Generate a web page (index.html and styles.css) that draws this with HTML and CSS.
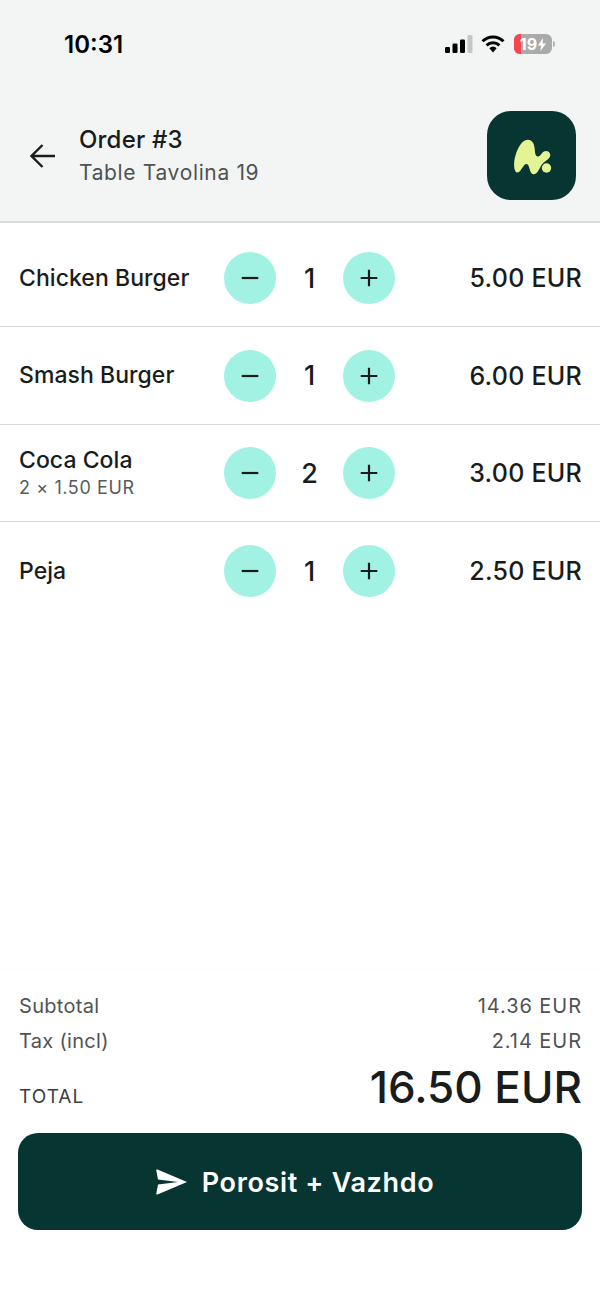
FILE: index.html
```html
<!DOCTYPE html>
<html lang="en">
<head>
    <meta charset="UTF-8">
    <meta name="viewport" content="width=device-width, initial-scale=1.0">
    <title>Order #3</title>
    <link rel="stylesheet" href="styles.css">
</head>
<body>
    <div class="app">
        <header class="top">
            <div class="status-bar">
                <span class="time">10:31</span>
                <div class="status-icons">
                    <svg width="28" height="18" viewBox="0 0 28 18">
                        <rect x="0" y="12" width="5" height="6" rx="1.2" fill="#000"/>
                        <rect x="7.5" y="8.5" width="5" height="9.5" rx="1.2" fill="#000"/>
                        <rect x="15" y="4.5" width="5" height="13.5" rx="1.2" fill="#000"/>
                        <rect x="22.5" y="0" width="5" height="18" rx="1.2" fill="#c6c6c6"/>
                    </svg>
                    <svg width="24" height="18" viewBox="0 0 24 18">
                        <path d="M1.5 6.2a15 15 0 0 1 21 0" fill="none" stroke="#000" stroke-width="3"/>
                        <path d="M5.6 10.3a9.2 9.2 0 0 1 12.8 0" fill="none" stroke="#000" stroke-width="3"/>
                        <path d="M8.4 13.2a4.6 4.6 0 0 1 7.2 0L12 17.6z" fill="#000"/>
                    </svg>
                    <div class="battery">
                        <div class="battery-body">
                            <span class="battery-low"></span>
                            <span class="battery-text">19</span>
                            <svg width="8" height="13" viewBox="0 0 8 13"><path d="M5 0 0 7.4h3L2.4 13 8 5.4H4.6z" fill="#fff"/></svg>
                        </div>
                        <span class="battery-cap"></span>
                    </div>
                </div>
            </div>
            <div class="title-bar">
                <svg class="back" width="28" height="28" viewBox="0 0 28 28">
                    <path d="M26 14H3M13.5 3 2.5 14l11 11" fill="none" stroke="#1a1c1c" stroke-width="2.4"/>
                </svg>
                <div class="title-text">
                    <div class="title">Order #3</div>
                    <div class="subtitle">Table Tavolina 19</div>
                </div>
                <div class="logo">
                    <svg width="40" height="40" viewBox="0 0 40 40">
                        <path d="M5 36.500C2 36 1 27 3.500 19.500 6 11 10.500 4 15.500 3.800c5.500-.2 7 5.200 7.300 10.200.2 4 1.200 7 3.700 6.500C29 20 30 15 34 15c3.500 0 5.500 3.500 3.500 6.500-2 3-5.500 4-8 7.500-2 3-4 9.500-8 9.300-4.500-.3-3.500-10.300-7-10.300S9 37 5 36.500z" fill="#e4f393"/>
                        <circle cx="34.500" cy="32" r="4.700" fill="#e4f393"/>
                    </svg>
                </div>
            </div>
        </header>

        <main class="items">
            <div class="item">
                <div class="item-name"><div>Chicken Burger</div></div>
                <div class="stepper">
                    <button class="step"><svg width="18" height="18" viewBox="0 0 18 18"><path d="M.7 9h16.600" stroke="#1a1c1c" stroke-width="2.200"/></svg></button>
                    <span class="qty">1</span>
                    <button class="step"><svg width="18" height="18" viewBox="0 0 18 18"><path d="M.7 9h16.600M9 .7v16.600" stroke="#1a1c1c" stroke-width="2.200"/></svg></button>
                </div>
                <div class="item-price">5.00 EUR</div>
            </div>
            <div class="item">
                <div class="item-name"><div>Smash Burger</div></div>
                <div class="stepper">
                    <button class="step"><svg width="18" height="18" viewBox="0 0 18 18"><path d="M.7 9h16.600" stroke="#1a1c1c" stroke-width="2.200"/></svg></button>
                    <span class="qty">1</span>
                    <button class="step"><svg width="18" height="18" viewBox="0 0 18 18"><path d="M.7 9h16.600M9 .7v16.600" stroke="#1a1c1c" stroke-width="2.200"/></svg></button>
                </div>
                <div class="item-price">6.00 EUR</div>
            </div>
            <div class="item">
                <div class="item-name">
                    <div>Coca Cola</div>
                    <div class="item-note">2 × 1.50 EUR</div>
                </div>
                <div class="stepper">
                    <button class="step"><svg width="18" height="18" viewBox="0 0 18 18"><path d="M.7 9h16.600" stroke="#1a1c1c" stroke-width="2.200"/></svg></button>
                    <span class="qty">2</span>
                    <button class="step"><svg width="18" height="18" viewBox="0 0 18 18"><path d="M.7 9h16.600M9 .7v16.600" stroke="#1a1c1c" stroke-width="2.200"/></svg></button>
                </div>
                <div class="item-price">3.00 EUR</div>
            </div>
            <div class="item">
                <div class="item-name"><div>Peja</div></div>
                <div class="stepper">
                    <button class="step"><svg width="18" height="18" viewBox="0 0 18 18"><path d="M.7 9h16.600" stroke="#1a1c1c" stroke-width="2.200"/></svg></button>
                    <span class="qty">1</span>
                    <button class="step"><svg width="18" height="18" viewBox="0 0 18 18"><path d="M.7 9h16.600M9 .7v16.600" stroke="#1a1c1c" stroke-width="2.200"/></svg></button>
                </div>
                <div class="item-price">2.50 EUR</div>
            </div>
        </main>

        <footer class="summary">
            <div class="line"><span>Subtotal</span><span class="line-value">14.36 EUR</span></div>
            <div class="line"><span>Tax (incl)</span><span class="line-value">2.14 EUR</span></div>
            <div class="total-line">
                <span class="total-label">TOTAL</span>
                <span class="total-value">16.50 EUR</span>
            </div>
            <button class="send-btn">
                <svg width="32" height="26" viewBox="0 0 32 26">
                    <path d="M1.500.5 31 13 1.500 25.500c-.7.3-1.300-.2-1.200-1L2 15.500 22 13 2 10.500.3 1.500C.2.700.8.200 1.500.5z" fill="#fff"/>
                </svg>
                Porosit + Vazhdo
            </button>
        </footer>
    </div>
</body>
</html>
```

FILE: styles.css
```css
* { margin: 0; padding: 0; box-sizing: border-box; }
body {
    font-family: Inter, 'Noto Sans', sans-serif;
    background: white;
    color: #1a1c1c;
}
.app {
    width: 600px;
    height: 1301px;
    display: flex;
    flex-direction: column;
}
.top {
    height: 223px;
    background: #f3f5f5;
    border-bottom: 2px solid #d8dada;
}
.status-bar {
    height: 88px;
    padding: 0 45px 0 64px;
    display: flex;
    align-items: center;
    justify-content: space-between;
}
.time { font-size: 24px; font-weight: 600; color: #000; }
.status-icons { display: flex; align-items: center; gap: 8px; }
.battery { display: flex; align-items: center; gap: 1px; margin-left: 1px; }
.battery-body {
    position: relative;
    width: 38px;
    height: 20px;
    border-radius: 6px;
    background: #aaa;
    overflow: hidden;
    display: flex;
    align-items: center;
    justify-content: center;
    gap: 1px;
    color: white;
    font-size: 16px;
    font-weight: 700;
}
.battery-low {
    position: absolute;
    left: 0;
    top: 0;
    bottom: 0;
    width: 7px;
    background: #f8444c;
}
.battery-text { position: relative; }
.battery-body svg { position: relative; }
.battery-cap { width: 2px; height: 6px; background: #b5b5b5; border-radius: 0 2px 2px 0; }
.title-bar {
    display: flex;
    align-items: center;
    padding: 23px 24px 0 29px;
}
.back { margin-right: 22px; }
.title-text { flex: 1; padding-top: 1px; }
.title { font-size: 24px; font-weight: 500; line-height: 32px; margin-bottom: 2px; letter-spacing: 0.2px; }
.subtitle { font-size: 21px; font-weight: 400; color: #4f5252; line-height: 30px; letter-spacing: 0.65px; }
.logo {
    width: 89px;
    height: 89px;
    border-radius: 24px;
    background: #073531;
    display: flex;
    align-items: center;
    justify-content: center;
}
.items { flex: 1; }
.item {
    height: 98px;
    padding: 0 18px 0 19px;
    display: flex;
    align-items: center;
    border-bottom: 1px solid #d6d8d8;
}
.item:first-child { height: 104px; padding-top: 7px; }
.item:nth-child(3) { height: 97px; }
.item:last-child { border-bottom: none; }
.item-name { width: 205px; font-size: 23px; font-weight: 500; line-height: 29px; letter-spacing: 0.05px; }
.item-note { font-size: 18px; font-weight: 400; color: #585b5b; line-height: 26px; letter-spacing: 0.6px; }
.stepper { display: flex; align-items: center; }
.step {
    width: 52px;
    height: 52px;
    border-radius: 50%;
    border: none;
    background: #a1f2e3;
    display: flex;
    align-items: center;
    justify-content: center;
}
.qty { width: 67px; text-align: center; font-size: 27px; font-weight: 500; }
.item-price { flex: 1; text-align: right; font-size: 25px; font-weight: 500; letter-spacing: 0.25px; }
.summary { padding: 18px 18px 71px; box-shadow: 0 -2px 4px rgba(0, 0, 0, 0.012); }
.line {
    display: flex;
    justify-content: space-between;
    font-size: 20px;
    font-weight: 400;
    line-height: 35px;
    color: #505353;
    letter-spacing: 0.3px;
    padding-left: 1px;
}
.line-value { letter-spacing: 0.95px; }
.total-line {
    display: flex;
    justify-content: space-between;
    align-items: baseline;
    margin-bottom: 18px;
}
.total-label { font-size: 19px; font-weight: 400; color: #3c3f3f; letter-spacing: 1px; padding-left: 1px; }
.total-value { font-size: 44px; font-weight: 500; line-height: 56px; }
.send-btn {
    width: 100%;
    height: 97px;
    border: none;
    border-radius: 20px;
    background: #073531;
    color: white;
    font-family: inherit;
    font-size: 27px;
    font-weight: 600;
    letter-spacing: 0.65px;
    display: flex;
    align-items: center;
    justify-content: center;
    gap: 14px;
    padding: 1px 10px 0 0;
}
```
